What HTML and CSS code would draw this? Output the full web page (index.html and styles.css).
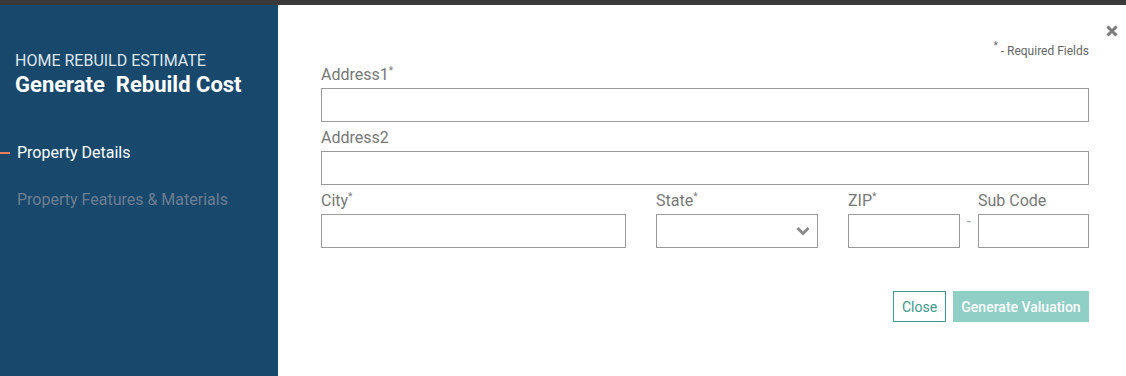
FILE: index.html
```html
<!DOCTYPE html>
<html>
<head>
<meta charset="utf-8">
<link rel="stylesheet" href="styles.css">
</head>
<body>
<div class="topbar"></div>
<div class="modal">
  <aside class="sidebar">
    <div class="kicker">HOME REBUILD ESTIMATE</div>
    <div class="title">Generate&nbsp; Rebuild Cost</div>
    <nav class="steps">
      <div class="step active">Property Details</div>
      <div class="step">Property Features &amp; Materials</div>
    </nav>
  </aside>
  <main class="main">
    <button class="close-x" aria-label="Close">
      <svg width="12" height="12" viewBox="0 0 12 12"><path d="M1.5 1.5 L10.5 10.5 M10.5 1.5 L1.5 10.5" stroke="#7b7b7b" stroke-width="3" fill="none"/></svg>
    </button>
    <div class="required"><sup>*</sup> - Required Fields</div>
    <div class="field">
      <label>Address1<sup>*</sup></label>
      <div class="input"></div>
    </div>
    <div class="field">
      <label>Address2</label>
      <div class="input"></div>
    </div>
    <div class="row">
      <div class="field city">
        <label>City<sup>*</sup></label>
        <div class="input"></div>
      </div>
      <div class="field state">
        <label>State<sup>*</sup></label>
        <div class="input select">
          <svg width="14" height="10" viewBox="0 0 14 10"><path d="M1.5 2 L7 7.5 L12.5 2" stroke="#8a8a8a" stroke-width="3" fill="none"/></svg>
        </div>
      </div>
      <div class="field zip">
        <label>ZIP<sup>*</sup></label>
        <div class="input"></div>
      </div>
      <div class="dash">-</div>
      <div class="field sub">
        <label>Sub Code</label>
        <div class="input"></div>
      </div>
    </div>
    <div class="actions">
      <button class="btn btn-close">Close</button>
      <button class="btn btn-primary">Generate Valuation</button>
    </div>
  </main>
</div>
</body>
</html>
```
FILE: styles.css
```css
* { box-sizing: border-box; }
html, body { margin: 0; padding: 0; }
body {
  width: 1126px;
  height: 376px;
  overflow: hidden;
  font-family: Roboto, "Liberation Sans", Arial, sans-serif;
  background: #ffffff;
}
.topbar {
  height: 5px;
  background: #3a3a3a;
}
.modal {
  display: flex;
  height: 371px;
}
.sidebar {
  width: 278px;
  flex: none;
  background: #19486d;
  padding-top: 46px;
}
.kicker {
  padding-left: 15px;
  font-size: 16px;
  line-height: 20px;
  color: #dfe6ee;
}
.title {
  padding-left: 15px;
  font-size: 22px;
  line-height: 26px;
  font-weight: 700;
  color: #ffffff;
  margin-top: 1px;
}
.steps {
  margin-top: 45px;
  display: flex;
  flex-direction: column;
  gap: 27px;
}
.step {
  position: relative;
  padding-left: 17px;
  font-size: 16px;
  line-height: 20px;
  color: #6c7e90;
}
.step.active {
  color: #ffffff;
}
.step.active::before {
  content: "";
  position: absolute;
  left: 0;
  top: 9px;
  width: 10px;
  height: 2px;
  background: #ea7f5a;
}
.main {
  position: relative;
  flex: 1;
  padding: 39px 37px 0 43px;
  display: flex;
  flex-direction: column;
  gap: 5px;
}
.close-x {
  position: absolute;
  top: 20px;
  right: 8px;
  border: 0;
  background: none;
  padding: 0;
  width: 12px;
  height: 12px;
  display: flex;
}
.required {
  text-align: right;
  font-size: 12px;
  line-height: 14px;
  color: #666666;
  margin-bottom: 1px;
}
.required sup, label sup {
  font-size: 10px;
  line-height: 0;
  vertical-align: 0;
  position: relative;
  top: -6px;
}
.field {
  display: flex;
  flex-direction: column;
  gap: 2px;
}
.field label {
  font-size: 16px;
  line-height: 22px;
  color: #777777;
}
.input {
  height: 34px;
  border: 1px solid #9a9a9a;
  background: #fff;
}
.select {
  display: flex;
  align-items: center;
  justify-content: flex-end;
  padding-right: 7px;
}
.row {
  display: flex;
  align-items: flex-start;
}
.city { width: 305px; margin-right: 30px; }
.state { width: 162px; margin-right: 30px; }
.zip { width: 112px; }
.dash {
  width: 18px;
  margin-top: 21px;
  text-align: center;
  font-size: 14px;
  line-height: 20px;
  color: #999999;
}
.sub { flex: 1; }
.actions {
  margin-top: 38px;
  display: flex;
  justify-content: flex-end;
  gap: 7px;
}
.btn {
  height: 31px;
  font-family: Roboto, "Liberation Sans", Arial, sans-serif;
  font-size: 14px;
  padding: 0;
}
.btn-close {
  width: 53px;
  background: #ffffff;
  border: 1px solid #3d9a8f;
  color: #3d9a8f;
  font-weight: 400;
}
.btn-primary {
  width: 136px;
  background: #8fcfc6;
  border: 0;
  color: #ffffff;
  font-weight: 500;
}
```
